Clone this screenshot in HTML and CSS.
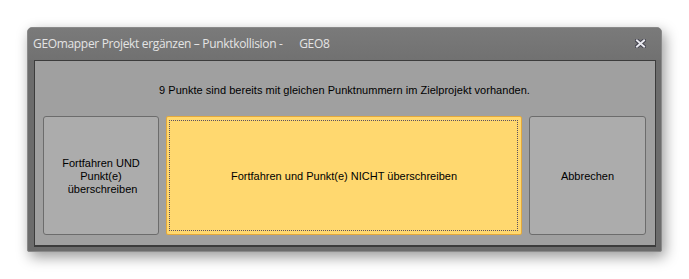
FILE: index.html
```html
<!DOCTYPE html>
<html lang="de">
<head>
<meta charset="utf-8">
<link rel="stylesheet" href="styles.css">
</head>
<body>
<div class="window">
  <div class="titlebar">
    <span class="title">GEOmapper Projekt ergänzen – Punktkollision -      GEO8</span>
    <svg class="close" width="11" height="9" viewBox="0 0 11 9">
      <path d="M2 1.5 L9 7.5 M9 1.5 L2 7.5" stroke="#44444f" stroke-width="4" stroke-linecap="square"/>
      <path d="M2 1.5 L9 7.5 M9 1.5 L2 7.5" stroke="#e8e8ee" stroke-width="2" stroke-linecap="square"/>
    </svg>
  </div>
  <div class="panel">
    <div class="msg">9 Punkte sind bereits mit gleichen Punktnummern im Zielprojekt vorhanden.</div>
    <div class="buttons">
      <div class="btn side">Fortfahren UND<br>Punkt(e)<br>&nbsp;überschreiben</div>
      <div class="btn main">Fortfahren und Punkt(e) NICHT überschreiben</div>
      <div class="btn side right">Abbrechen</div>
    </div>
  </div>
</div>
</body>
</html>
```

FILE: styles.css
```css
html, body {
  margin: 0;
  background: #ffffff;
}
body {
  padding: 27px 0 0 27px;
  width: 689px;
  height: 279px;
  box-sizing: border-box;
  overflow: hidden;
}
.window {
  width: 635px;
  height: 225px;
  box-sizing: border-box;
  border: 1px solid #8a8a8a;
  border-radius: 5px 5px 2px 2px;
  background: #6c6c6c;
  box-shadow: 3px 5px 14px rgba(0, 0, 0, 0.4);
  display: flex;
  flex-direction: column;
}
.titlebar {
  height: 31px;
  flex: none;
  display: flex;
  align-items: center;
  justify-content: space-between;
  padding: 0 15px 1px 5px;
  background: linear-gradient(#7a7a7a, #717171);
  border-radius: 4px 4px 0 0;
}
.title {
  white-space: pre;
  font-family: "Open Sans", "Noto Sans", sans-serif;
  font-size: 12px;
  color: #e4e4e4;
  letter-spacing: -0.33px;
}
.close {
  display: block;
}
.panel {
  flex: 1;
  margin: 0 5px 4px 6px;
  border: 1px solid #3c3c3c;
  border-bottom-width: 2px;
  background: #a0a0a0;
  display: flex;
  flex-direction: column;
  padding: 0 9px 10px 8px;
  font-family: "Liberation Sans", Arial, sans-serif;
  font-size: 11px;
  color: #000;
}
.msg {
  height: 55px;
  display: flex;
  align-items: center;
  justify-content: center;
  padding-top: 3px;
  box-sizing: border-box;
  letter-spacing: 0.03px;
}
.buttons {
  flex: 1;
  display: flex;
  gap: 7px;
}
.btn {
  box-sizing: border-box;
  display: flex;
  align-items: center;
  justify-content: center;
  text-align: center;
  line-height: 13px;
  border-radius: 3px;
}
.side {
  width: 116px;
  flex: none;
  background: #acacac;
  border: 1px solid #6c6c6c;
  padding-top: 1px;
}
.side.right {
  width: 117px;
}
.main {
  flex: 1;
  position: relative;
  background: #ffd86f;
  border: 1px solid #e3a83c;
  border-radius: 2px;
  padding-top: 1px;
}
.main::after {
  content: "";
  position: absolute;
  inset: 3px 3px 3px 2px;
  border: 1px dotted #5a5060;
}
```
